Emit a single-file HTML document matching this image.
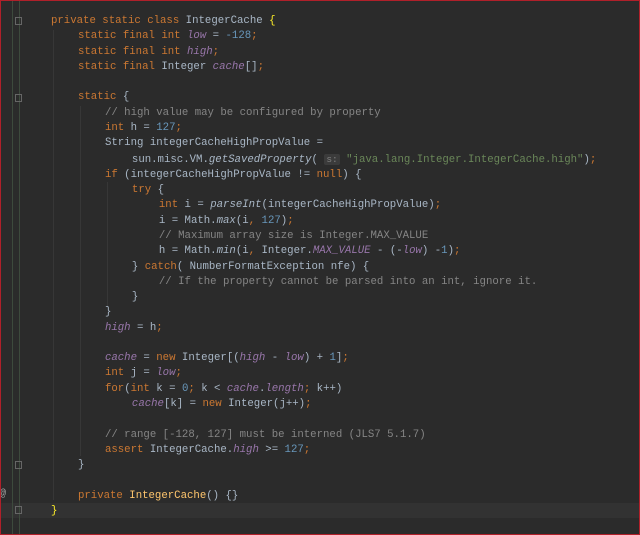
<!DOCTYPE html>
<html><head><style>
html,body{margin:0;padding:0}
body{width:640px;height:535px;background:#2b2b2b;position:relative;overflow:hidden;font-family:"Liberation Mono",monospace;font-size:10.7px;color:#a9b7c6}
.frame{position:absolute;left:0;top:0;width:638px;height:533px;border:1px solid #b0202a;}
.vl{position:absolute;top:0;bottom:0;width:1px}
.cur{position:absolute;left:0;right:0;top:503px;height:15px;background:#323232}
.code{position:absolute;left:24px;top:14px;white-space:pre;line-height:15.28px}
.i{letter-spacing:0.33px}
.k{color:#cc7832}.f{color:#9876aa;font-style:italic}.n{color:#6897bb}.s{color:#6a8759}.c{color:#858585}.m{font-style:italic}
.hint{background:#3b3b3b;color:#808080;font-size:9.5px;padding:0 2px;border-radius:2px}
.fold{position:absolute;left:15px;width:7px;height:8px;border:1px solid #666;box-sizing:border-box}
.ig{position:absolute;width:1px;background:#373737}
</style></head><body>
<div class="cur"></div>
<div class="vl" style="left:12px;background:#3d4a3d"></div>
<div class="vl" style="left:19px;background:#3d4a3d"></div>
<div class="ig" style="left:53px;top:30px;height:470px"></div>
<div class="ig" style="left:80px;top:106px;height:350px"></div>
<div class="ig" style="left:107px;top:182px;height:125px"></div>
<div class="fold" style="top:17px"></div>
<div class="fold" style="top:94px"></div>
<div class="fold" style="top:461px"></div>
<div class="fold" style="top:506px"></div>
<div style="position:absolute;left:0;top:489px;color:#aaa;font-size:10px">@</div>
<div class="code"><span class="i">    </span><span class="k">private static class</span> IntegerCache <span style="color:#ffef28">{</span>
<span class="i">        </span><span class="k">static final int</span> <span class="f">low</span> = <span class="n">-128</span><span class="k">;</span>
<span class="i">        </span><span class="k">static final int</span> <span class="f">high</span><span class="k">;</span>
<span class="i">        </span><span class="k">static final</span> Integer <span class="f">cache</span>[]<span class="k">;</span>

<span class="i">        </span><span class="k">static</span> {
<span class="i">            </span><span class="c">// high value may be configured by property</span>
<span class="i">            </span><span class="k">int</span> h = <span class="n">127</span><span class="k">;</span>
<span class="i">            </span>String integerCacheHighPropValue =
<span class="i">                </span>sun.misc.VM.<span class="m">getSavedProperty</span>( <span class="hint">s:</span> <span class="s">"java.lang.Integer.IntegerCache.high"</span>)<span class="k">;</span>
<span class="i">            </span><span class="k">if</span> (integerCacheHighPropValue != <span class="k">null</span>) {
<span class="i">                </span><span class="k">try</span> {
<span class="i">                    </span><span class="k">int</span> i = <span class="m">parseInt</span>(integerCacheHighPropValue)<span class="k">;</span>
<span class="i">                    </span>i = Math.<span class="m">max</span>(i<span class="k">,</span> <span class="n">127</span>)<span class="k">;</span>
<span class="i">                    </span><span class="c">// Maximum array size is Integer.MAX_VALUE</span>
<span class="i">                    </span>h = Math.<span class="m">min</span>(i<span class="k">,</span> Integer.<span class="f">MAX_VALUE</span> - (-<span class="f">low</span>) -<span class="n">1</span>)<span class="k">;</span>
<span class="i">                </span>} <span class="k">catch</span>( NumberFormatException nfe) {
<span class="i">                    </span><span class="c">// If the property cannot be parsed into an int, ignore it.</span>
<span class="i">                </span>}
<span class="i">            </span>}
<span class="i">            </span><span class="f">high</span> = h<span class="k">;</span>

<span class="i">            </span><span class="f">cache</span> = <span class="k">new</span> Integer[(<span class="f">high</span> - <span class="f">low</span>) + <span class="n">1</span>]<span class="k">;</span>
<span class="i">            </span><span class="k">int</span> j = <span class="f">low</span><span class="k">;</span>
<span class="i">            </span><span class="k">for</span>(<span class="k">int</span> k = <span class="n">0</span><span class="k">;</span> k &lt; <span class="f">cache</span>.<span class="f">length</span><span class="k">;</span> k++)
<span class="i">                </span><span class="f">cache</span>[k] = <span class="k">new</span> Integer(j++)<span class="k">;</span>

<span class="i">            </span><span class="c">// range [-128, 127] must be interned (JLS7 5.1.7)</span>
<span class="i">            </span><span class="k">assert</span> IntegerCache.<span class="f">high</span> &gt;= <span class="n">127</span><span class="k">;</span>
<span class="i">        </span>}

<span class="i">        </span><span class="k">private</span> <span style="color:#ffc66d">IntegerCache</span>() {}
<span class="i">    </span><span style="color:#ffef28">}</span></div>
<div class="frame"></div>
</body></html>
